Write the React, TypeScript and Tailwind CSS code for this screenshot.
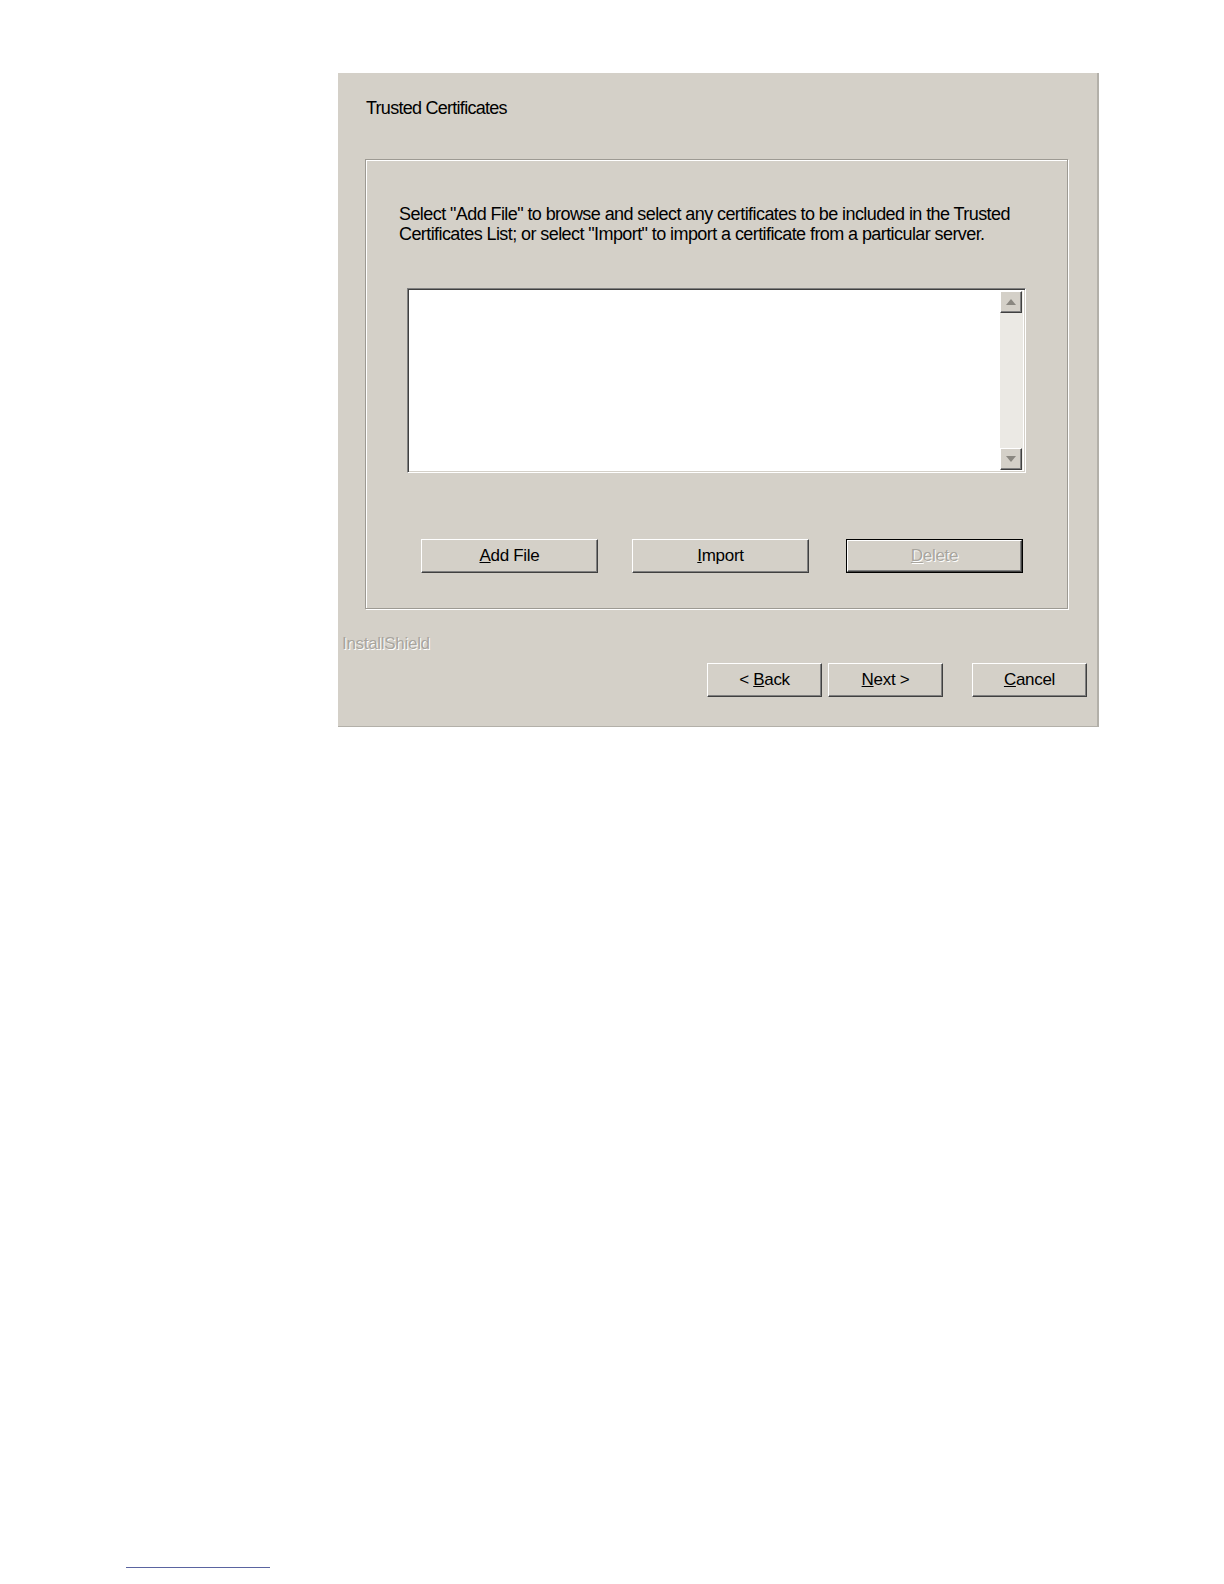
import React from "react";

const font = { fontFamily: '"Liberation Sans", Arial, sans-serif' };

function RaisedButton({
  children,
  width,
  disabled = false,
  isDefault = false,
}: {
  children: React.ReactNode;
  width: string;
  disabled?: boolean;
  isDefault?: boolean;
}) {
  const inner = (
    <div
      className={`flex h-full w-full items-center justify-center border border-t-white border-l-white border-r-[#404040] border-b-[#404040] bg-[#d4d0c8] shadow-[inset_-1px_-1px_0_#808080] text-[17px] tracking-[-0.3px] ${
        disabled ? "text-[#a8a59e] [text-shadow:1px_1px_0_#ffffff]" : "text-black"
      }`}
    >
      {children}
    </div>
  );
  if (isDefault) {
    return <div className={`${width} h-[34px] border border-black`}>{inner}</div>;
  }
  return <div className={`${width} h-[34px]`}>{inner}</div>;
}

function ScrollArrow({ up }: { up: boolean }) {
  return (
    <div className="flex h-[22px] w-[22px] items-center justify-center border border-t-white border-l-white border-r-[#404040] border-b-[#404040] bg-[#d4d0c8] shadow-[inset_-1px_-1px_0_#808080]">
      <svg width="10" height="6" viewBox="0 0 10 6">
        {up ? (
          <polygon points="5,0 10,6 0,6" fill="#8a8780" />
        ) : (
          <polygon points="0,0 10,0 5,6" fill="#8a8780" />
        )}
      </svg>
    </div>
  );
}

export default function App() {
  return (
    <div className="relative min-h-[1584px] w-[1224px] bg-white" style={font}>
      <div className="pl-[338px] pt-[73px]">
        <div className="flex h-[654px] w-[761px] flex-col border-r-2 border-b border-[#b3b0a9] bg-[#d4d0c8] text-black">
          <p className="pl-[28px] pt-[25px] text-[18px] leading-[20px] tracking-[-0.73px]">
            Trusted Certificates
          </p>

          {/* group box */}
          <div className="ml-[27px] mt-[41px] flex h-[450px] w-[703px] flex-col border border-[#9d9a93] shadow-[1px_1px_0_#ffffff,inset_1px_1px_0_#ffffff]">
            <p className="pl-[33px] pt-[44px] text-[18px] leading-[20px] tracking-[-0.58px]">
              Select "Add File" to browse and select any certificates to be included in the Trusted
              <br />
              Certificates List; or select "Import" to import a certificate from a particular server.
            </p>

            <div className="ml-[41px] mt-[44px] flex h-[185px] w-[619px] border border-t-[#808080] border-l-[#808080] border-r-white border-b-white bg-white shadow-[inset_1px_1px_0_#404040,inset_-1px_-1px_0_#d4d0c8]">
              <div className="flex-1" />
              <div className="my-[2px] mr-[2px] flex w-[23px] flex-col bg-[#ebe9e4]">
                <ScrollArrow up />
                <div className="flex-1" />
                <ScrollArrow up={false} />
              </div>
            </div>

            <div className="ml-[55px] mt-[66px] flex items-center">
              <RaisedButton width="w-[177px]">
                <span>
                  <u>A</u>dd File
                </span>
              </RaisedButton>
              <div className="w-[34px]" />
              <RaisedButton width="w-[177px]">
                <span>
                  <u>I</u>mport
                </span>
              </RaisedButton>
              <div className="w-[37px]" />
              <RaisedButton width="w-[177px]" disabled isDefault>
                <span>
                  <u>D</u>elete
                </span>
              </RaisedButton>
            </div>
          </div>

          <p className="pl-[4px] pt-[25px] text-[17px] leading-[20px] tracking-[-0.3px] text-[#a8a59e] [text-shadow:1px_1px_0_#ffffff]">
            InstallShield
          </p>

          <div className="ml-[369px] mt-[9px] flex">
            <RaisedButton width="w-[115px]">
              <span>
                &lt; <u>B</u>ack
              </span>
            </RaisedButton>
            <div className="w-[6px]" />
            <RaisedButton width="w-[115px]">
              <span>
                <u>N</u>ext &gt;
              </span>
            </RaisedButton>
            <div className="w-[29px]" />
            <RaisedButton width="w-[115px]">
              <span>
                <u>C</u>ancel
              </span>
            </RaisedButton>
          </div>
        </div>
      </div>

      <div className="ml-[126px] mt-[840px] h-px w-[144px] bg-[#5a64a0]" />
    </div>
  );
}
